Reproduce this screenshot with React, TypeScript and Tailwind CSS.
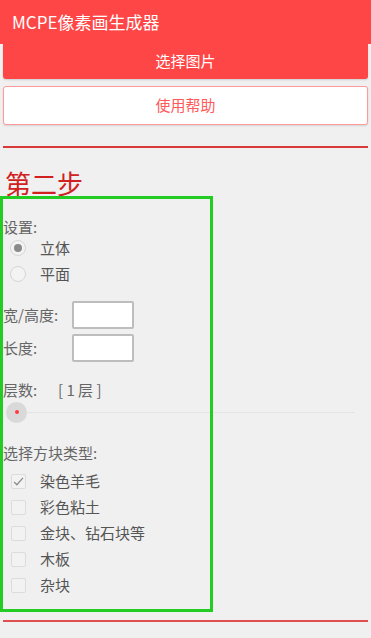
import { useState } from 'react';

const font = { fontFamily: '"Noto Sans CJK SC", "Noto Sans", sans-serif' };

const blockTypes = ['染色羊毛', '彩色粘土', '金块、钻石块等', '木板', '杂块'];

function Radio({ checked, label }: { checked: boolean; label: string }) {
  return (
    <div className="h-[26px] flex items-center">
      <div className="ml-[7px] w-[16px] h-[16px] rounded-full border border-[#d6d6d6] bg-[#f3f3f3] flex items-center justify-center">
        {checked && <div className="w-[8px] h-[8px] rounded-full bg-[#8a8a8a]" />}
      </div>
      <span className="ml-[14px] text-[15px] text-[#555]">{label}</span>
    </div>
  );
}

function Check({ checked, label }: { checked: boolean; label: string }) {
  return (
    <div className="h-[26px] flex items-center">
      <div className="ml-[8px] w-[15px] h-[15px] rounded-[2px] border border-[#dcdcdc] bg-[#f2f2f2] flex items-center justify-center">
        {checked && (
          <svg viewBox="0 0 16 16" className="w-[13px] h-[13px]">
            <path d="M2.5 8.5 L6 12 L13.5 3.5" fill="none" stroke="#8a8a8a" strokeWidth="1.6" />
          </svg>
        )}
      </div>
      <span className="ml-[14px] text-[15px] text-[#555]">{label}</span>
    </div>
  );
}

export default function App() {
  const [mode] = useState('3d');
  const [picked] = useState([0]);

  return (
    <div className="min-h-screen bg-[#f0f0f0] pb-4" style={font}>
      <div className="h-[44px] bg-[#ff4646] flex items-center pl-[12px] text-white text-[17px]">
        MCPE像素画生成器
      </div>
      <div className="px-[3px]">
        <div className="h-[35px] bg-[#ff4646] rounded-b-[3px] shadow-[0_1px_2px_rgba(0,0,0,0.15)] flex items-center justify-center text-white text-[15px]">
          选择图片
        </div>
        <div className="mt-[7px] h-[39px] bg-white border border-[#ff9a9a] rounded-[3px] shadow-[0_1px_2px_rgba(0,0,0,0.12)] flex items-center justify-center text-[#ff5a5a] text-[15px]">
          使用帮助
        </div>
        <div className="mt-[21px] h-[2px] bg-[#d83a3a]" />
      </div>

      <div className="mt-[21px] pl-[5px] h-[27px] text-[26px] leading-[27px] text-[#d02020]">第二步</div>

      <div className="relative">
        <div className="pt-[23px] pb-[14px] pl-[3px] text-[#666] text-[15px]">
          <div className="h-[16px] flex items-center">设置:</div>
          <Radio checked={mode === '3d'} label="立体" />
          <Radio checked={mode === 'flat'} label="平面" />

          <div className="mt-[14px] h-[28px] flex items-center">
            <span className="w-[69px]">宽/高度:</span>
            <div className="w-[62px] h-[28px] bg-white border-2 border-[#bdbdbd] rounded-[2px]" />
          </div>
          <div className="mt-[5px] h-[28px] flex items-center">
            <span className="w-[69px]">长度:</span>
            <div className="w-[62px] h-[28px] bg-white border-2 border-[#bdbdbd] rounded-[2px]" />
          </div>

          <div className="mt-[18px] h-[20px] flex items-center">
            <span className="w-[55px]">层数:</span>
            <span>[ 1 层 ]</span>
          </div>

          <div className="mt-[2px] h-[20px] flex items-center">
            <div className="ml-[3px] w-[21px] h-[21px] rounded-full bg-[#d9d9d9] flex items-center justify-center shrink-0">
              <div className="w-[4px] h-[4px] rounded-full bg-[#ff3b3b]" />
            </div>
            <div className="w-[328px] h-[1px] bg-[#e4e4e4]" />
          </div>

          <div className="mt-[21px] h-[20px] flex items-center">选择方块类型:</div>
          <div className="mt-[5px]">
            {blockTypes.map((t, i) => (
              <Check key={t} checked={picked.includes(i)} label={t} />
            ))}
          </div>
        </div>
        <div className="absolute left-0 top-0 w-[213px] h-full border-[3px] border-[#22cc22] pointer-events-none" />
      </div>

      <div className="mx-[3px] mt-[8px] h-[2px] bg-[#e05050]" />
    </div>
  );
}
